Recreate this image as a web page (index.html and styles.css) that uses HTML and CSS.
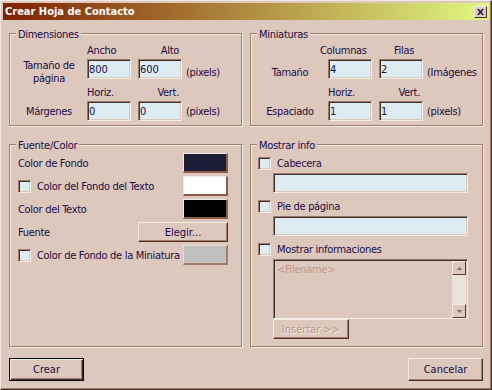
FILE: index.html
```html
<!DOCTYPE html>
<html lang="es">
<head>
    <meta charset="UTF-8">
    <title>Crear Hoja de Contacto</title>
    <link rel="stylesheet" href="styles.css">
</head>
<body>
<div class="window">
    <div class="titlebar">
        <span class="title">Crear Hoja de Contacto</span>
        <button class="close">
            <svg width="7" height="6" viewBox="0 0 7 6"><path d="M0 0h2l1.5 2L5 0h2L4.5 3 7 6H5L3.5 4 2 6H0l2.5-3z" fill="#200c44"/></svg>
        </button>
    </div>

    <div class="content">
        <div class="groups">
            <div class="group">
                <span class="group-title">Dimensiones</span>
                <div class="dims">
                    <span></span>
                    <span class="hd hd-start">Ancho</span>
                    <span class="hd hd-end">Alto</span>
                    <span></span>

                    <span class="rowlabel two">Tamaño de<br>página</span>
                    <input class="field" type="text" value="800">
                    <input class="field" type="text" value="600">
                    <span class="unit">(pixels)</span>

                    <span></span>
                    <span class="hd hd-start">Horiz.</span>
                    <span class="hd hd-end">Vert.</span>
                    <span></span>

                    <span class="rowlabel">Márgenes</span>
                    <input class="field" type="text" value="0">
                    <input class="field" type="text" value="0">
                    <span class="unit">(pixels)</span>
                </div>
            </div>

            <div class="group">
                <span class="group-title">Miniaturas</span>
                <div class="dims">
                    <span></span>
                    <span class="hd hd-wide">Columnas</span>
                    <span class="hd hd-center">Filas</span>
                    <span></span>

                    <span class="rowlabel">Tamaño</span>
                    <input class="field" type="text" value="4">
                    <input class="field" type="text" value="2">
                    <span class="unit">(Imágenes</span>

                    <span></span>
                    <span class="hd hd-start">Horiz.</span>
                    <span class="hd hd-end">Vert.</span>
                    <span></span>

                    <span class="rowlabel">Espaciado</span>
                    <input class="field" type="text" value="1">
                    <input class="field" type="text" value="1">
                    <span class="unit">(pixels)</span>
                </div>
            </div>

            <div class="group">
                <span class="group-title">Fuente/Color</span>
                <div class="rows">
                    <div class="row">
                        <span class="label">Color de Fondo</span>
                        <span class="swatch" style="background:#1c1c34"></span>
                    </div>
                    <div class="row">
                        <span class="check"></span>
                        <span class="label">Color del Fondo del Texto</span>
                        <span class="swatch" style="background:#ffffff"></span>
                    </div>
                    <div class="row">
                        <span class="label">Color del Texto</span>
                        <span class="swatch" style="background:#000000"></span>
                    </div>
                    <div class="row">
                        <span class="label">Fuente</span>
                        <button class="btn btn-choose">Elegir...</button>
                    </div>
                    <div class="row">
                        <span class="check"></span>
                        <span class="label">Color de Fondo de la Miniatura</span>
                        <span class="swatch swatch-flat" style="background:#c0c0c0"></span>
                    </div>
                </div>
            </div>

            <div class="group">
                <span class="group-title">Mostrar info</span>
                <div class="info">
                    <div class="check-row">
                        <span class="check"></span>
                        <span>Cabecera</span>
                    </div>
                    <input class="field wide" type="text">

                    <div class="check-row">
                        <span class="check"></span>
                        <span>Pie de página</span>
                    </div>
                    <input class="field wide" type="text">

                    <div class="check-row">
                        <span class="check"></span>
                        <span>Mostrar informaciones</span>
                    </div>
                    <div class="memo">
                        <div class="memo-text">&lt;Filename&gt;</div>
                        <div class="vscroll">
                            <span class="sbtn"><svg width="5" height="3" viewBox="0 0 5 3"><path d="M2.5 0L5 3H0z" fill="#8a6454"/></svg></span>
                            <span class="track"></span>
                            <span class="sbtn"><svg width="5" height="3" viewBox="0 0 5 3"><path d="M0 0h5L2.5 3z" fill="#8a6454"/></svg></span>
                        </div>
                    </div>
                    <button class="btn btn-insert" disabled>Insertar &gt;&gt;</button>
                </div>
            </div>
        </div>

        <div class="actions">
            <button class="btn btn-action btn-default">Crear</button>
            <button class="btn btn-action">Cancelar</button>
        </div>
    </div>
</div>
</body>
</html>
```

FILE: styles.css
```css
body {
    margin: 0;
}

.window {
    box-sizing: border-box;
    width: 492px;
    height: 390px;
    padding: 2px;
    background-color: #dcc8bc;
    border: 1px solid;
    border-color: #f2e8e2 #4a3024 #4a3024 #f2e8e2;
    box-shadow: inset -1px -1px 0 #a47c68;
    font-family: "DejaVu Sans Condensed", "DejaVu Sans", sans-serif;
    font-size: 11px;
    letter-spacing: -0.3px;
    color: #200c44;
}

.titlebar {
    display: flex;
    align-items: center;
    justify-content: space-between;
    height: 17px;
    padding: 0 2px;
    background: linear-gradient(to right, #802000, #e0f880);
}

.title {
    color: #fff;
    font-size: 11px;
    font-weight: bold;
    letter-spacing: 0;
    line-height: 17px;
}

.close {
    display: flex;
    align-items: center;
    justify-content: center;
    box-sizing: border-box;
    width: 13px;
    height: 12px;
    padding: 0;
    background-color: #dcc8bc;
    border: 1px solid;
    border-color: #f4ece6 #4a3024 #4a3024 #f4ece6;
}

.content {
    padding: 13px 6px 0;
}

.groups {
    display: grid;
    grid-template-columns: 233px 233px;
    grid-template-rows: 93px 203px;
    column-gap: 8px;
    row-gap: 18px;
}

.group {
    position: relative;
    box-sizing: border-box;
    border: 1px solid #a47c68;
    box-shadow: inset 1px 1px 0 #f4ece6, 1px 1px 0 #f4ece6;
}

.group-title {
    position: absolute;
    top: -6px;
    left: 6px;
    padding: 0 2px;
    line-height: 13px;
    background-color: #dcc8bc;
}

/* dimension grids */
.dims {
    display: grid;
    grid-template-columns: 76px 51px 48px 54px;
    grid-template-rows: 15px 27px 15px 20px;
    padding: 10px 0 0 1px;
    line-height: 13px;
}

.hd {
    align-self: start;
}

.hd-start {
    justify-self: start;
}

.hd-end {
    justify-self: end;
    margin-right: 7px;
}

.hd-center {
    justify-self: center;
    margin-left: 2px;
}

.hd-wide {
    justify-self: start;
    margin-left: -8px;
}

.rowlabel {
    align-self: center;
    text-align: center;
}

.rowlabel.two {
    align-self: start;
}

.unit {
    align-self: center;
    white-space: nowrap;
}

.field {
    box-sizing: border-box;
    width: 44px;
    height: 20px;
    margin: 0;
    padding: 0 1px;
    font: inherit;
    color: #200c44;
    background-color: #dcecf0;
    border: 1px solid;
    border-color: #9c7868 #f4ece6 #f4ece6 #9c7868;
    box-shadow: inset 1px 1px 0 #3c3030, inset -1px -1px 0 #dcc8bc;
    outline: none;
}

.field.wide {
    width: 195px;
    margin-left: 15px;
}

.check {
    box-sizing: border-box;
    flex: none;
    width: 13px;
    height: 13px;
    background-color: #dcecf0;
    border: 1px solid;
    border-color: #9c7868 #f4ece6 #f4ece6 #9c7868;
    box-shadow: inset 1px 1px 0 #3c3030, inset -1px -1px 0 #dcc8bc;
}

/* Fuente/Color */
.rows {
    display: flex;
    flex-direction: column;
    gap: 3px;
    padding: 8px 13px 0 8px;
}

.row {
    display: flex;
    align-items: center;
    height: 20px;
}

.row .check {
    margin-right: 6px;
}

.row .label {
    flex: 1;
    white-space: nowrap;
}

.swatch {
    flex: none;
    box-sizing: border-box;
    width: 45px;
    height: 20px;
    border-style: solid;
    border-width: 1px 2px 2px 1px;
    border-color: #f4ece6 #8c5c44 #8c5c44 #f4ece6;
}

.swatch-flat {
    border-color: #e8dcd4 #a47c68 #a47c68 #e8dcd4;
}

.btn {
    box-sizing: border-box;
    margin: 0;
    padding: 0;
    font: inherit;
    color: #200c44;
    background-color: #dcc8bc;
    border: 1px solid;
    border-color: #f4ece6 #4a3024 #4a3024 #f4ece6;
    box-shadow: inset -1px -1px 0 #a47c68;
}

.btn-choose {
    flex: none;
    width: 90px;
    height: 20px;
}

/* Mostrar info */
.info {
    display: flex;
    flex-direction: column;
    align-items: flex-start;
    padding: 12px 0 0 7px;
}

.check-row {
    display: flex;
    align-items: center;
    gap: 6px;
    height: 13px;
    margin-bottom: 3px;
    line-height: 13px;
}

.info .field.wide {
    margin-bottom: 7px;
}

.memo {
    box-sizing: border-box;
    display: flex;
    width: 195px;
    height: 60px;
    margin-left: 15px;
    border: 1px solid;
    border-color: #9c7868 #f4ece6 #f4ece6 #9c7868;
    box-shadow: inset 1px 1px 0 #3c3030;
}

.memo-text {
    flex: 1;
    padding: 3px 0 0 3px;
    line-height: 13px;
    color: #c4968a;
}

.vscroll {
    display: flex;
    flex-direction: column;
    width: 14px;
    margin: 1px 1px 0 0;
}

.sbtn {
    box-sizing: border-box;
    display: flex;
    align-items: center;
    justify-content: center;
    height: 14px;
    background-color: #dcc8bc;
    border: 1px solid;
    border-color: #f4ece6 #5a3a2c #5a3a2c #f4ece6;
}

.track {
    flex: 1;
    background-color: #ece2dc;
}

.btn-insert {
    width: 76px;
    height: 20px;
    margin-left: 15px;
    color: #c4968a;
    text-shadow: 1px 1px 0 #f4ece6;
}

.actions {
    display: flex;
    justify-content: space-between;
    margin-top: 11px;
}

.btn-action {
    width: 75px;
    height: 23px;
}

.btn-default {
    border-color: #000;
    box-shadow: inset 1px 1px 0 #f4ece6, inset -1px -1px 0 #4a3024, inset -2px -2px 0 #a47c68;
}
```
